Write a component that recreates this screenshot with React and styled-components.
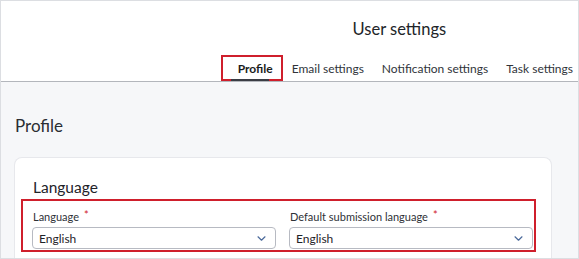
import React from "react";
import styled, { createGlobalStyle } from "styled-components";

const GlobalStyle = createGlobalStyle`
  body {
    margin: 0;
    font-family: Lato, "Noto Sans", sans-serif;
    color: #1f2329;
  }
`;

const Frame = styled.div`
  width: 579px;
  height: 259px;
  box-sizing: border-box;
  border: 1px solid #dcdee2;
  background: #f6f7f9;
  overflow: hidden;
  display: flex;
  flex-direction: column;
`;

const Header = styled.header`
  background: #ffffff;
  border-bottom: 1px solid #b3b6bc;
  display: flex;
  justify-content: flex-end;
  padding: 16px 0 0 0;
`;

const Nav = styled.nav`
  display: flex;
  flex-direction: column;
  align-items: center;
`;

const Title = styled.h1`
  margin: 0 0 14px;
  font-size: 16.5px;
  line-height: 24px;
  font-weight: 400;
  color: #222428;
`;

const Tabs = styled.div`
  display: flex;
  align-items: stretch;
`;

const Tab = styled.div`
  position: relative;
  height: 26px;
  box-sizing: border-box;
  display: flex;
  align-items: center;
  padding: ${p => (p.$highlight ? "0 8px 0 15px" : "0 9px")};
  font-size: 12px;
  font-weight: ${p => (p.$active ? 700 : 400)};
  color: ${p => (p.$active ? "#1a1c20" : "#30343a")};
  white-space: nowrap;
  border: ${p => (p.$highlight ? "2px solid #cf1f2c" : "none")};

  &:last-child {
    padding-right: 5px;
  }

  &::after {
    content: "";
    display: ${p => (p.$active ? "block" : "none")};
    position: absolute;
    left: 8px;
    right: 12px;
    bottom: -2px;
    height: 2px;
    background: #3a3d44;
  }
`;

const Main = styled.main`
  flex: 1;
  padding: 32px 26px 0 13px;
`;

const PageTitle = styled.h2`
  margin: 0 0 19px 1px;
  font-size: 17px;
  line-height: 24px;
  font-weight: 400;
  color: #2a2d33;
`;

const Card = styled.section`
  background: #ffffff;
  border: 1px solid #e7e8ec;
  border-bottom: none;
  border-radius: 8px 8px 0 0;
  padding: 19px 18px 20px 17px;
  height: 120px;
`;

const CardTitle = styled.h3`
  margin: 0 0 2px 1px;
  font-size: 15.5px;
  line-height: 20px;
  font-weight: 400;
  color: #1f2329;
`;

const Highlight = styled.div`
  border: 2px solid #cf1f2c;
  margin: 0 -3px 0 -11px;
  padding: 6px 1px 1px 9px;
`;

const Fields = styled.div`
  display: grid;
  grid-template-columns: 1fr 1fr;
  column-gap: 13px;
`;

const Field = styled.div`
  display: flex;
  flex-direction: column;
`;

const Label = styled.label`
  font-size: 11px;
  line-height: 16px;
  color: #2e3137;
  margin: 0 0 2px 1px;
`;

const Required = styled.span`
  color: #d0202e;
  margin-left: 5px;
  font-size: 11px;
  vertical-align: 2px;
`;

const Select = styled.div`
  height: 22px;
  box-sizing: border-box;
  border: 1px solid #b7bac2;
  border-radius: 4px;
  display: flex;
  align-items: center;
  justify-content: space-between;
  padding: 0 9px 0 6px;
  font-size: 12px;
  color: #1f2329;
`;

const Chevron = () => (
  <svg width="9" height="5" viewBox="0 0 9 5" fill="none">
    <path d="M1 0.8l3.5 3.4 3.5-3.4" stroke="#4b6a9b" strokeWidth="1.2" strokeLinecap="round" strokeLinejoin="round" />
  </svg>
);

const tabs = [
  { label: "Profile", active: true },
  { label: "Email settings" },
  { label: "Notification settings" },
  { label: "Task settings" }
];

const fields = [
  { label: "Language", value: "English" },
  { label: "Default submission language", value: "English" }
];

export default function App() {
  return (
    <>
      <GlobalStyle />
      <Frame>
        <Header>
          <Nav>
            <Title>User settings</Title>
            <Tabs>
              {tabs.map(t => (
                <Tab key={t.label} $active={t.active} $highlight={t.active}>
                  {t.label}
                </Tab>
              ))}
            </Tabs>
          </Nav>
        </Header>
        <Main>
          <PageTitle>Profile</PageTitle>
          <Card>
            <CardTitle>Language</CardTitle>
            <Highlight>
              <Fields>
                {fields.map(f => (
                  <Field key={f.label}>
                    <Label>
                      {f.label}
                      <Required>*</Required>
                    </Label>
                    <Select>
                      {f.value}
                      <Chevron />
                    </Select>
                  </Field>
                ))}
              </Fields>
            </Highlight>
          </Card>
        </Main>
      </Frame>
    </>
  );
}
